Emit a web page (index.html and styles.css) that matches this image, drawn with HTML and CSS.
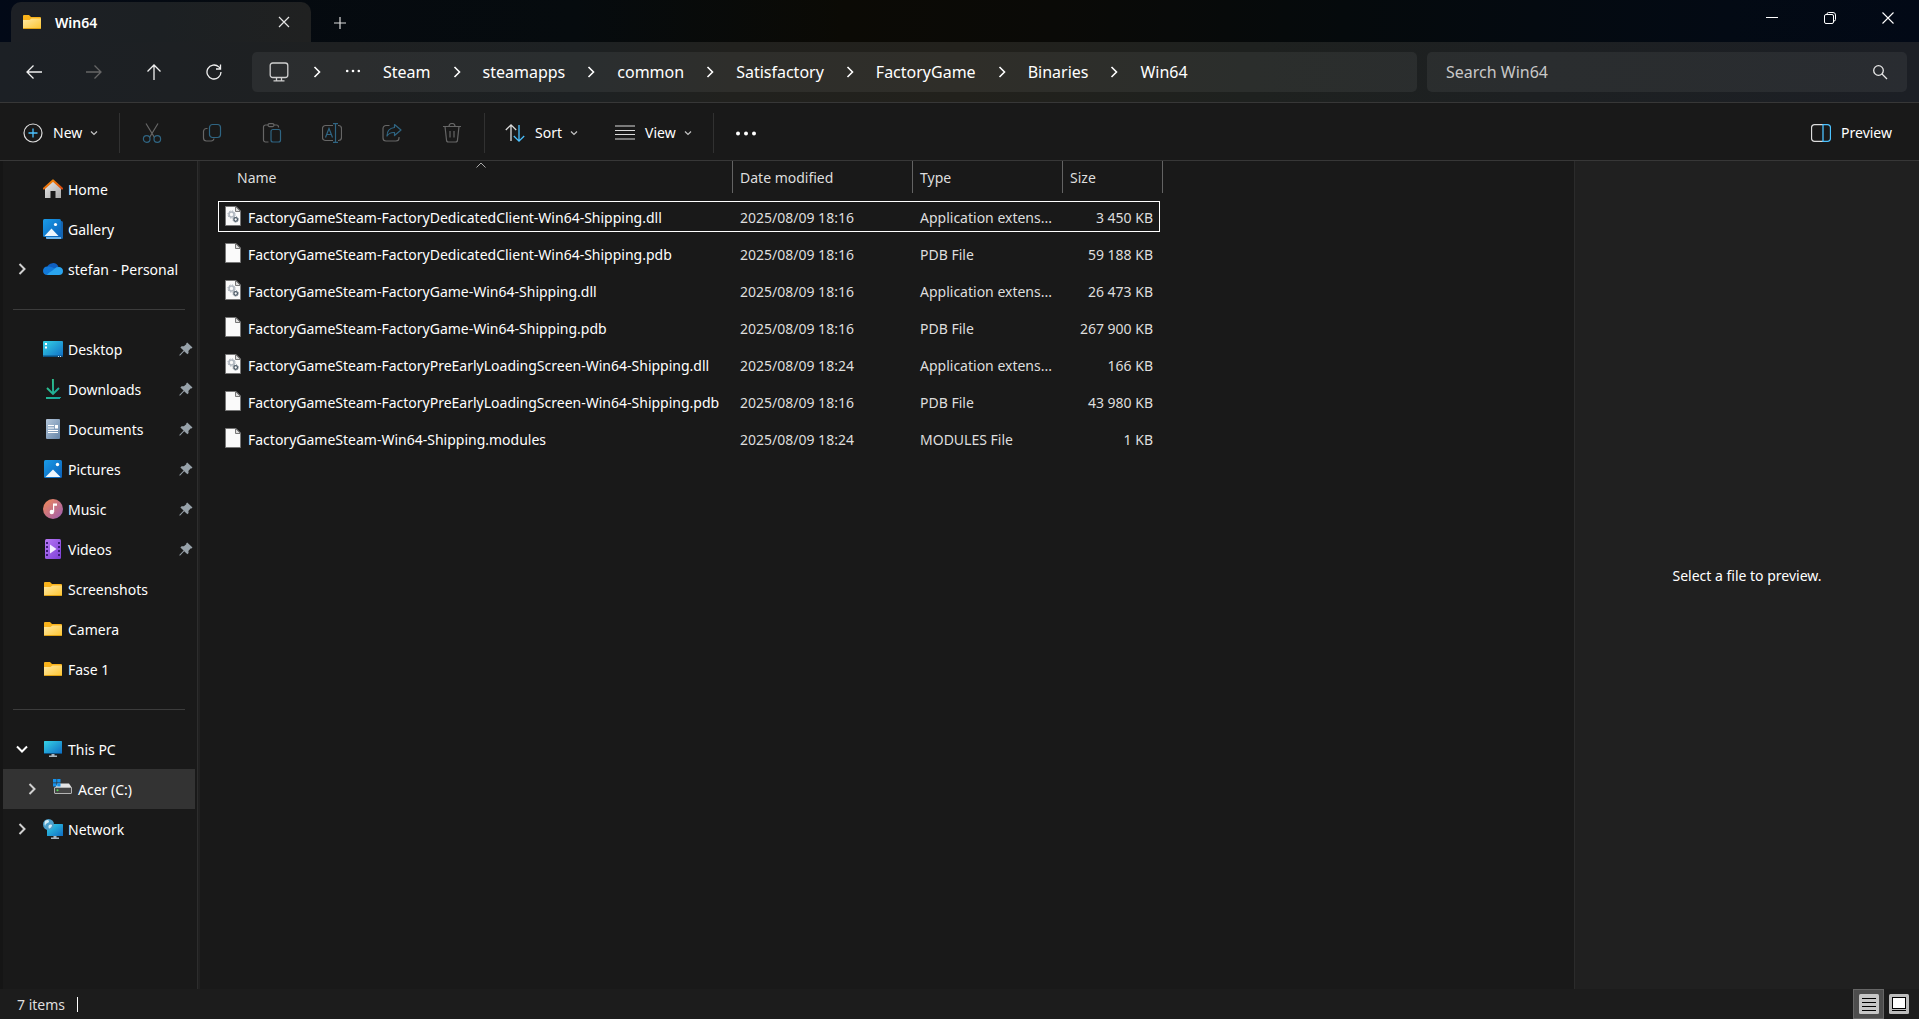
FILE: index.html
```html
<!DOCTYPE html>
<html lang="en">
<head>
<meta charset="utf-8">
<title>Win64</title>
<link rel="stylesheet" href="styles.css">
</head>
<body>
<svg class="defs" aria-hidden="true">
  <defs>
    <linearGradient id="g-folder" x1="0" y1="0" x2="1" y2="1"><stop offset="0" stop-color="#ffe9a6"/><stop offset="1" stop-color="#fdc52f"/></linearGradient>
    <linearGradient id="g-blue" x1="0" y1="0" x2="1" y2="1"><stop offset="0" stop-color="#1a9ce8"/><stop offset="1" stop-color="#0a5fb8"/></linearGradient>
    <linearGradient id="g-screen" x1="0" y1="0" x2="1" y2="1"><stop offset="0" stop-color="#35d3e6"/><stop offset="1" stop-color="#0f6cc4"/></linearGradient>
    <linearGradient id="g-house" x1="0" y1="0" x2="1" y2="1"><stop offset="0" stop-color="#e8e8e8"/><stop offset="1" stop-color="#a9a9a9"/></linearGradient>
    <linearGradient id="g-roof" x1="0" y1="0" x2="1" y2="1"><stop offset="0" stop-color="#f7930a"/><stop offset="1" stop-color="#d9480f"/></linearGradient>
    <linearGradient id="g-down" x1="0" y1="0" x2="1" y2="1"><stop offset="0" stop-color="#37c888"/><stop offset="1" stop-color="#14a3a0"/></linearGradient>
    <linearGradient id="g-doc" x1="0" y1="0" x2="1" y2="1"><stop offset="0" stop-color="#b4c6da"/><stop offset="1" stop-color="#6585a8"/></linearGradient>
    <linearGradient id="g-music" x1="0" y1="0" x2="1" y2="1"><stop offset="0" stop-color="#f58a54"/><stop offset="1" stop-color="#9a5cb4"/></linearGradient>
    <linearGradient id="g-video" x1="0" y1="0" x2="1" y2="1"><stop offset="0" stop-color="#b878f5"/><stop offset="1" stop-color="#7c3fd6"/></linearGradient>
    <symbol id="folder" viewBox="0 0 20 20">
      <path d="M1 4a1 1 0 0 1 1-1h5l2 2h9a1 1 0 0 1 1 1v5H1z" fill="#f9b21a"/>
      <path d="M1 8h6.500l2-1.500H19V16a1 1 0 0 1-1 1H2a1 1 0 0 1-1-1z" fill="url(#g-folder)"/>
      <path d="M1 16h18a1 1 0 0 1-1 1H2a1 1 0 0 1-1-1z" fill="#dfa114"/>
    </symbol>
    <symbol id="pin" viewBox="0 0 14 14"><path d="M8.200.500 13.500 5.600 12.400 6.600 11.500 6.500 9.400 9 9.600 11 8.400 12.300 5.200 9.200 1.200 13.400.300 13.600.500 12.700 4.600 8.500 1.400 5.500 2.600 4.200 4.800 4.300 7.300 2.300 7.200 1.400z" fill="#98a2aa"/></symbol>
    <symbol id="right" viewBox="0 0 12 12"><path d="M3.500 1l5 5-5 5" fill="none" stroke="currentColor"/></symbol>
    <symbol id="down" viewBox="0 0 12 12"><path d="M1 3.500l5 5 5-5" fill="none" stroke="currentColor"/></symbol>
    <symbol id="small-down" viewBox="0 0 8 8"><path d="M1 2.500l3 3 3-3" fill="none" stroke="#c4c4c4" stroke-width="1.200"/></symbol>
    <symbol id="file" viewBox="0 0 16 20">
      <path d="M.500.500H11L15.500 5V19.500H.500z" fill="#fafafa" stroke="#777"/>
      <path d="M10.500.500V5.500H15.500z" fill="#dcdcdc" stroke="#777"/>
    </symbol>
    <symbol id="dll" viewBox="0 0 16 20">
      <use href="#file"/>
      <circle cx="6.500" cy="8.500" r="2.500" fill="none" stroke="#b3bac2" stroke-width="1.600"/>
      <circle cx="6.500" cy="8.500" r="3.600" fill="none" stroke="#a3abb5" stroke-width="1" stroke-dasharray="1.400 1.430"/>
      <circle cx="10.700" cy="13.500" r="1.800" fill="none" stroke="#4c5a67" stroke-width="1.300"/>
      <circle cx="10.700" cy="13.500" r="2.700" fill="none" stroke="#4c5a67" stroke-width=".8" stroke-dasharray="1 1.120"/>
    </symbol>
  </defs>
</svg>

<header class="titlebar">
  <div class="tab">
    <svg class="i20"><use href="#folder"/></svg>
    <span class="tab-title">Win64</span>
    <button class="tab-close" aria-label="Close tab"><svg class="i12" viewBox="0 0 12 12"><path d="M1 1l10 10M11 1L1 11" stroke="#e6e6e6" stroke-width="1.200"/></svg></button>
  </div>
  <button class="tab-add" aria-label="New tab"><svg class="i12" viewBox="0 0 12 12"><path d="M0 6h12M6 0v12" stroke="#dcdcdc" stroke-width="1.200"/></svg></button>
  <div class="window-controls">
    <button aria-label="Minimize"><svg class="i12" viewBox="0 0 12 12"><path d="M0 5.500h12" stroke="#fff"/></svg></button>
    <button aria-label="Restore"><svg class="i12" viewBox="0 0 12 12" fill="none" stroke="#fff"><rect x=".5" y="2.500" width="9" height="9" rx="1.500"/><path d="M3 2.500V2A1.500 1.500 0 0 1 4.500.500H9A2.500 2.500 0 0 1 11.500 3v4.500A1.500 1.500 0 0 1 10 9H9.500"/></svg></button>
    <button aria-label="Close"><svg class="i12" viewBox="0 0 12 12"><path d="M.500.500l11 11M11.500.500l-11 11" stroke="#fff" stroke-width="1.100"/></svg></button>
  </div>
</header>

<nav class="navbar" aria-label="Address">
  <div class="nav-buttons">
    <button aria-label="Back"><svg class="i16" viewBox="0 0 16 16"><path d="M16 8H1M7.500 1.500L1 8l6.500 6.500" /></svg></button>
    <button aria-label="Forward" disabled><svg class="i16" viewBox="0 0 16 16"><path d="M0 8h15M8.500 1.500L15 8l-6.500 6.500" /></svg></button>
    <button aria-label="Up"><svg class="i16" viewBox="0 0 16 16"><path d="M8 16V1M1.500 7.500L8 1l6.500 6.500" /></svg></button>
    <button aria-label="Refresh"><svg class="i16" viewBox="0 0 16 16"><path d="M15 8a7 7 0 1 1-2.200-5.100L14.500 4.500M14.500.500v4.500h-4.500" /></svg></button>
  </div>
  <div class="address">
    <button class="crumb-device" aria-label="Computer"><svg class="i20" viewBox="0 0 20 20" fill="none" stroke="#cfcfcf" stroke-width="1.300"><rect x="1.200" y="1" width="17.600" height="14.500" rx="2.500"/><path d="M7.500 15.500v3M12.500 15.500v3M4.500 18.800h11"/></svg></button>
    <svg class="crumb-arrow"><use href="#right"/></svg>
    <button class="crumb-more" aria-label="More folders"><svg class="i16" viewBox="0 0 16 16" fill="#fff"><circle cx="2.200" cy="7" r="1.300"/><circle cx="8" cy="7" r="1.300"/><circle cx="13.800" cy="7" r="1.300"/></svg></button>
    <a class="crumb" href="#">Steam</a><svg class="crumb-arrow"><use href="#right"/></svg>
    <a class="crumb" href="#">steamapps</a><svg class="crumb-arrow"><use href="#right"/></svg>
    <a class="crumb" href="#">common</a><svg class="crumb-arrow"><use href="#right"/></svg>
    <a class="crumb" href="#">Satisfactory</a><svg class="crumb-arrow"><use href="#right"/></svg>
    <a class="crumb" href="#">FactoryGame</a><svg class="crumb-arrow"><use href="#right"/></svg>
    <a class="crumb" href="#">Binaries</a><svg class="crumb-arrow"><use href="#right"/></svg>
    <a class="crumb" href="#">Win64</a>
  </div>
  <div class="search">
    <input type="search" placeholder="Search Win64" aria-label="Search Win64">
    <svg class="i16" viewBox="0 0 16 16" fill="none" stroke="#e8e8e8" stroke-width="1.300"><circle cx="6.500" cy="6.500" r="4.800"/><path d="M10 10l5 5"/></svg>
  </div>
</nav>

<div class="toolbar" role="toolbar" aria-label="Commands">
  <button class="cmd cmd-new"><svg class="i20" viewBox="0 0 20 20" fill="none"><circle cx="10" cy="10" r="9" stroke="#dcdcdc" stroke-width="1.200"/><path d="M10 5.500v9M5.500 10h9" stroke="#4cc2ff" stroke-width="1.300"/></svg><span>New</span><svg class="i8"><use href="#small-down"/></svg></button>
  <span class="divider"></span>
  <button class="cmd-icon" aria-label="Cut" disabled><svg class="i20" viewBox="0 0 20 20" fill="none" stroke-width="1.200"><path d="M4 .500l8.500 14M16 .500L7.500 14.500" stroke="#666"/><circle cx="4.700" cy="16" r="3.300" stroke="#2f6583"/><circle cx="15.300" cy="16" r="3.300" stroke="#2f6583"/></svg></button>
  <button class="cmd-icon" aria-label="Copy" disabled><svg class="i20" viewBox="0 0 20 20" fill="none" stroke-width="1.200"><path d="M5.500 5.500H4.500A3 3 0 0 0 1.500 8.500V15a3 3 0 0 0 3 3H9a3 3 0 0 0 3-2.500" stroke="#666"/><rect x="7.500" y="1.500" width="11" height="13" rx="3" stroke="#2f6583"/></svg></button>
  <button class="cmd-icon" aria-label="Paste" disabled><svg class="i20" viewBox="0 0 20 20" fill="none" stroke-width="1.200"><path d="M6.500 19H3.500A2 2 0 0 1 1.500 17V4A2 2 0 0 1 3.500 2H6M12 2h2.500a2 2 0 0 1 2 2v.500" stroke="#666"/><rect x="6" y=".6" width="6" height="3" rx="1.500" stroke="#666"/><rect x="9" y="6.500" width="9.500" height="12.500" rx="2" stroke="#2f6583"/></svg></button>
  <button class="cmd-icon" aria-label="Rename" disabled><svg class="i20" viewBox="0 0 20 20" fill="none" stroke-width="1.200"><path d="M11 2.500H3.500a3 3 0 0 0-3 3v9a3 3 0 0 0 3 3H11M16 2.500h.500a3 3 0 0 1 3 3v9a3 3 0 0 1-3 3H16" stroke="#666"/><path d="M3.500 14.500L7 5.500l3.500 9M4.800 11.500h4.400M13.500 1v18M11 .600h5M11 19.400h5" stroke="#2f6583"/></svg></button>
  <button class="cmd-icon" aria-label="Share" disabled><svg class="i20" viewBox="0 0 20 20" fill="none" stroke-width="1.200" stroke-linejoin="round"><path d="M7.500 2.500H4a3 3 0 0 0-3 3V15a3 3 0 0 0 3 3h10a3 3 0 0 0 3-3v-1" stroke="#666"/><path d="M12.500 1.500L19 7l-6.500 5.500V9.500C9 9.300 6.500 10.500 5 13c0-5 3-8 7.500-8.500z" stroke="#2f6583"/></svg></button>
  <button class="cmd-icon" aria-label="Delete" disabled><svg class="i20" viewBox="0 0 20 20" fill="none" stroke="#666" stroke-width="1.200"><path d="M1 3.500h18M7 3.500a3 3 0 0 1 6 0M3 3.500l1.500 13.500a2 2 0 0 0 2 2h7a2 2 0 0 0 2-2L17 3.500M8 8v6.500M12 8v6.500"/></svg></button>
  <span class="divider"></span>
  <button class="cmd cmd-sort"><svg class="i20" viewBox="0 0 20 20" fill="none" stroke-width="1.300"><path d="M6 18V2M.800 7L6 1.800 11.200 7" stroke="#dcdcdc"/><path d="M14 2v16M8.800 13l5.200 5.200L19.200 13" stroke="#4cc2ff"/></svg><span>Sort</span><svg class="i8"><use href="#small-down"/></svg></button>
  <button class="cmd cmd-view"><svg class="i20" viewBox="0 0 20 20" stroke="#dcdcdc" stroke-width="1.200"><path d="M0 3h20M0 7.500h20M0 11.500h20M0 16h20"/></svg><span>View</span><svg class="i8"><use href="#small-down"/></svg></button>
  <span class="divider"></span>
  <button class="cmd-icon" aria-label="See more"><svg class="i20" viewBox="0 0 20 20" fill="#fff"><circle cx="2" cy="10.500" r="2"/><circle cx="10" cy="10.500" r="2"/><circle cx="18" cy="10.500" r="2"/></svg></button>
  <button class="cmd cmd-preview"><svg class="i20" viewBox="0 0 20 20" fill="none" stroke-width="1.300"><path d="M12 1.700H3.500a3 3 0 0 0-3 3v10.600a3 3 0 0 0 3 3H12" stroke="#dcdcdc"/><path d="M12 1.700h4.500a3 3 0 0 1 3 3v10.600a3 3 0 0 1-3 3H12z" stroke="#4cc2ff"/></svg><span>Preview</span></button>
</div>

<div class="content">
  <aside class="sidebar">
    <a class="item" href="#"><i class="twist"></i><svg class="i20" viewBox="0 0 20 20"><path d="M2 9l8-7 8 7v10h-5.500v-7h-5v7H2z" fill="url(#g-house)"/><path d="M1 9.500L10 1.500l9 8" fill="none" stroke="url(#g-roof)" stroke-width="2.200" stroke-linecap="round" stroke-linejoin="round"/></svg><span>Home</span></a>
    <a class="item" href="#"><i class="twist"></i><svg class="i20" viewBox="0 0 20 20"><rect x="3" y="2" width="17" height="18" rx="1.500" fill="#1564b0"/><path d="M3 18h15v2H4a1 1 0 0 1-1-1z" fill="#6fb4ea"/><rect width="18" height="18" rx="1.500" fill="url(#g-blue)"/><path d="M1.500 17l7-7.500 7 7.500z" fill="#eef6fd"/><circle cx="12.500" cy="5.500" r="1.600" fill="#fff"/></svg><span>Gallery</span></a>
    <a class="item" href="#"><i class="twist"><svg class="i12"><use href="#right"/></svg></i><svg class="i20" viewBox="0 0 20 20"><path d="M4 9a6 6 0 0 1 11.500-1L9 13z" fill="#0f5fc0"/><path d="M4.500 7.500C1.500 7.500 0 9.500 0 12c0 2.500 2 4 4 4h5l4-6-4-1.800A7 7 0 0 0 4.500 7.500z" fill="#1279d8"/><path d="M4 16h12a4 4 0 0 0 4-4 4 4 0 0 0-4.500-4c-3 0-4 2-6 3.500S5 14 4 16z" fill="#2aa4ee"/></svg><span>stefan - Personal</span></a>
    <hr class="rule">
    <a class="item" href="#"><i class="twist"></i><svg class="i20" viewBox="0 0 20 20"><rect y="2" width="20" height="16" rx="1" fill="url(#g-screen)"/><path d="M0 16.500h20V17a1 1 0 0 1-1 1H1a1 1 0 0 1-1-1z" fill="#0b4f80"/><path d="M2 4h2v2H2zM2 7.500h2v2H2z" fill="#fff"/><path d="M15 17h1v1h-1zM17 17h1v1h-1z" fill="#cde"/></svg><span>Desktop</span><svg class="pin"><use href="#pin"/></svg></a>
    <a class="item" href="#"><i class="twist"></i><svg class="i20" viewBox="0 0 20 20" fill="none" stroke="url(#g-down)" stroke-width="1.900"><path d="M9.900 0l.2 15M4 9l6 6 6-6M3 19h14l0 .01"/></svg><span>Downloads</span><svg class="pin"><use href="#pin"/></svg></a>
    <a class="item" href="#"><i class="twist"></i><svg class="i20" viewBox="0 0 20 20"><rect x="3" width="14" height="20" rx="1" fill="url(#g-doc)"/><path d="M5 6.500h6M5 9h6M5 11.500h10M5 13.500h10" stroke="#fff" stroke-width="1.200"/><path d="M12 6h3v3.500h-3z" fill="#fff"/></svg><span>Documents</span><svg class="pin"><use href="#pin"/></svg></a>
    <a class="item" href="#"><i class="twist"></i><svg class="i20" viewBox="0 0 20 20"><rect x="1" y="1" width="18" height="18" rx="1.500" fill="url(#g-blue)"/><path d="M2.500 18L10 10.500l7.500 7.500z" fill="#eef6fd"/><circle cx="14.500" cy="5.500" r="1.700" fill="#fff"/></svg><span>Pictures</span><svg class="pin"><use href="#pin"/></svg></a>
    <a class="item" href="#"><i class="twist"></i><svg class="i20" viewBox="0 0 20 20"><circle cx="10" cy="10" r="10" fill="url(#g-music)"/><circle cx="8.800" cy="13" r="2.200" fill="#fff"/><path d="M10 13V4.500h4v2.300h-2.800V13z" fill="#fff"/></svg><span>Music</span><svg class="pin"><use href="#pin"/></svg></a>
    <a class="item" href="#"><i class="twist"></i><svg class="i20" viewBox="0 0 20 20"><rect x="2" width="16" height="20" rx="1.500" fill="url(#g-video)"/><path d="M4 3v15M16 3v15" stroke="#3c1c78" stroke-width="2" stroke-dasharray="2 2"/><path d="M7 5.500l6.500 4.500L7 14.500z" fill="#f3ecff"/></svg><span>Videos</span><svg class="pin"><use href="#pin"/></svg></a>
    <a class="item" href="#"><i class="twist"></i><svg class="i20"><use href="#folder"/></svg><span>Screenshots</span></a>
    <a class="item" href="#"><i class="twist"></i><svg class="i20"><use href="#folder"/></svg><span>Camera</span></a>
    <a class="item" href="#"><i class="twist"></i><svg class="i20"><use href="#folder"/></svg><span>Fase 1</span></a>
    <hr class="rule">
    <a class="item" href="#"><i class="twist open"><svg class="i12"><use href="#down"/></svg></i><svg class="i20" viewBox="0 0 20 20"><rect x="1" y="2" width="18" height="13" rx=".5" fill="url(#g-screen)"/><path d="M1 14h18v1H1z" fill="#0b4f80"/><path d="M8.500 15h3v1.500h2.500V18H6v-1.500h2.500z" fill="#a9b4bd"/></svg><span>This PC</span></a>
    <a class="item nested selected" href="#"><i class="twist"><svg class="i12"><use href="#right"/></svg></i><svg class="i20" viewBox="0 0 20 20"><path d="M4.500 4.500h11.500l3 4.500H2z" fill="#e4e4e4"/><rect x="1.500" y="8.500" width="17" height="6" rx=".5" fill="#454545" stroke="#b4b4b4"/><circle cx="4.500" cy="11.300" r="1" fill="#52e052"/><path d="M0 0h3.500v3.500H0zM4.200 0h3.300v3.500H4.200zM0 4.200h3.500v3.300H0zM4.200 4.200h3.300v3.300H4.200z" fill="#1692ec"/></svg><span>Acer (C:)</span></a>
    <a class="item" href="#"><i class="twist"><svg class="i12"><use href="#right"/></svg></i><svg class="i20" viewBox="0 0 20 20"><rect x="4" y="5" width="16" height="12" rx=".5" fill="url(#g-screen)"/><path d="M10.500 17h3v1.500h2.500V20H8v-1.500h2.500z" fill="#a9b4bd"/><circle cx="5.500" cy="5.500" r="5.500" fill="#4c9fcb"/><path d="M2 2c2-1.500 4-1 4 .500S3 4 2.500 6 1 5 2 2zM6 6c1.500-1 3-.500 3 .500S7.500 9 6.500 9.500 5 7 6 6z" fill="#d2ebf5"/></svg><span>Network</span></a>
  </aside>

  <main class="files">
    <table class="list">
      <colgroup><col class="c-name"><col class="c-date"><col class="c-type"><col class="c-size"></colgroup>
      <thead><tr>
        <th scope="col" class="sorted">Name<svg class="sort-mark" viewBox="0 0 10 6"><path d="M.500 5.500L5 1l4.500 4.500" fill="none" stroke="#aaa"/></svg></th>
        <th scope="col">Date modified</th><th scope="col">Type</th><th scope="col">Size</th>
      </tr></thead>
      <tbody>
        <tr class="focused"><td><div class="name"><svg class="fi"><use href="#dll"/></svg>FactoryGameSteam-FactoryDedicatedClient-Win64-Shipping.dll</div></td><td>2025/08/09 18:16</td><td>Application extens...</td><td>3 450 KB</td></tr>
        <tr><td><div class="name"><svg class="fi"><use href="#file"/></svg>FactoryGameSteam-FactoryDedicatedClient-Win64-Shipping.pdb</div></td><td>2025/08/09 18:16</td><td>PDB File</td><td>59 188 KB</td></tr>
        <tr><td><div class="name"><svg class="fi"><use href="#dll"/></svg>FactoryGameSteam-FactoryGame-Win64-Shipping.dll</div></td><td>2025/08/09 18:16</td><td>Application extens...</td><td>26 473 KB</td></tr>
        <tr><td><div class="name"><svg class="fi"><use href="#file"/></svg>FactoryGameSteam-FactoryGame-Win64-Shipping.pdb</div></td><td>2025/08/09 18:16</td><td>PDB File</td><td>267 900 KB</td></tr>
        <tr><td><div class="name"><svg class="fi"><use href="#dll"/></svg>FactoryGameSteam-FactoryPreEarlyLoadingScreen-Win64-Shipping.dll</div></td><td>2025/08/09 18:24</td><td>Application extens...</td><td>166 KB</td></tr>
        <tr><td><div class="name"><svg class="fi"><use href="#file"/></svg>FactoryGameSteam-FactoryPreEarlyLoadingScreen-Win64-Shipping.pdb</div></td><td>2025/08/09 18:16</td><td>PDB File</td><td>43 980 KB</td></tr>
        <tr><td><div class="name"><svg class="fi"><use href="#file"/></svg>FactoryGameSteam-Win64-Shipping.modules</div></td><td>2025/08/09 18:24</td><td>MODULES File</td><td>1 KB</td></tr>
      </tbody>
    </table>
  </main>

  <section class="preview" aria-label="Preview">Select a file to preview.</section>
</div>

<footer class="status">
  <span class="count">7 items</span>
  <div class="view-modes">
    <button class="active" aria-label="Details view"><svg class="i20" viewBox="0 0 20 20"><rect width="20" height="20" rx="1.500" fill="#c6c6c6"/><path d="M3 4.500h14M3 8.500h14M3 12.500h14M3 16.500h14" stroke="#000"/></svg></button>
    <button aria-label="Large icons view"><svg class="i20" viewBox="0 0 20 20"><rect width="20" height="20" rx="1.500" fill="#bcbcbc"/><rect x="3.500" y="3.500" width="13" height="11" fill="#fff" stroke="#000"/><path d="M3 16.500h14" stroke="#000"/></svg></button>
  </div>
</footer>
</body>
</html>
```
FILE: styles.css
```css
* { box-sizing: border-box; }
body {
  margin: 0;
  height: 100vh;
  display: flex;
  flex-direction: column;
  overflow: hidden;
  background: #191919;
  color: #fff;
  font: 14px/20px "Noto Sans", "Open Sans", sans-serif;
}
button {
  margin: 0;
  padding: 0;
  border: 0;
  background: none;
  color: inherit;
  font: inherit;
  display: flex;
  align-items: center;
  justify-content: center;
}
a { color: inherit; text-decoration: none; }
svg { display: block; flex: none; }
.defs { position: absolute; width: 0; height: 0; }
.i8 { width: 8px; height: 8px; }
.i12 { width: 12px; height: 12px; }
.i16 { width: 16px; height: 16px; }
.i20 { width: 20px; height: 20px; }

/* Title bar */
.titlebar {
  flex: none;
  height: 42px;
  display: flex;
  padding: 2px 2px 0 11px;
  background: linear-gradient(90deg, #020917 0%, #050a10 12%, #060b0e 30%, #0b0a05 44%, #0a0a07 55%, #050a0c 70%, #030a14 90%, #020916 100%);
}
.tab {
  width: 300px;
  display: flex;
  align-items: center;
  padding: 0 17px 0 11px;
  border-radius: 10px 10px 0 0;
  background: linear-gradient(90deg, #1d2025, #1c2023 50%, #202121);
}
.tab-title { margin-left: 13px; padding-top: 2px; font-weight: 600; }
.tab-close { width: 20px; height: 20px; margin-left: auto; }
.tab-add { width: 58px; padding-top: 2px; }
.window-controls { margin-left: auto; display: flex; height: 32px; }
.window-controls button { width: 58px; }

/* Address row */
.navbar {
  flex: none;
  height: 61px;
  display: flex;
  align-items: center;
  padding-right: 12px;
  border-bottom: 1px solid #373737;
  background: linear-gradient(90deg, #1c2025 0%, #1e2021 18%, #1d2123 30%, #21211e 38%, #22211c 50%, #1e211f 65%, #1d2022 80%, #1c1f25 100%);
}
.nav-buttons { width: 252px; display: flex; padding-left: 4px; }
.nav-buttons button { width: 60px; height: 40px; }
.nav-buttons path { fill: none; stroke: #f0f0f0; stroke-width: 1.3; }
.nav-buttons button:disabled path { stroke: #666; }
.address, .search {
  height: 40px;
  display: flex;
  align-items: center;
  border-radius: 5px;
  background: rgba(255, 255, 255, .06);
  font-size: 16px;
}
.address { flex: 1; min-width: 0; padding-left: 17px; }
.crumb-arrow { width: 12px; height: 12px; margin: 0 20px; stroke-width: 1.6; }
.crumb-device + .crumb-arrow { margin: 0 22px; }
.crumb-more { margin-right: 22px; }
.search { width: 480px; margin-left: 10px; padding: 0 19px; }
.search input {
  flex: 1;
  min-width: 0;
  padding: 0;
  border: 0;
  outline: 0;
  background: none;
  color: #fff;
  font: inherit;
}
.search input::placeholder { color: #c8c8c8; opacity: 1; }

/* Command row */
.toolbar {
  flex: none;
  height: 58px;
  display: flex;
  align-items: center;
  padding-top: 3px;
  border-bottom: 1px solid #373737;
}
.divider { width: 1px; height: 40px; margin: 0 2px; background: #313131; }
.cmd { height: 40px; gap: 10px; justify-content: flex-start; }
.cmd .i8 { margin-left: -2px; }
.cmd-new { width: 117px; padding-left: 23px; }
.cmd-sort { width: 112px; padding-left: 18px; }
.cmd-view { width: 112px; padding-left: 16px; }
.cmd-icon { width: 60px; height: 40px; }
.cmd-preview { margin-left: auto; margin-right: 27px; }

/* Body */
.content { flex: 1; min-height: 0; display: flex; }
.sidebar {
  width: 198px;
  padding: 8px 2px 0 0;
  border-left: 3px solid #151515;
  border-right: 1px solid #2d2d2d;
  overflow: hidden;
}
.item {
  height: 40px;
  display: flex;
  align-items: center;
  padding: 0 2px 0 10px;
  white-space: nowrap;
}
.item span { margin-left: 5px; padding-top: 2px; }
.twist { width: 30px; padding-left: 3px; color: #d0d0d0; stroke-width: 2; }
.open { color: #fff; }
.nested { padding-left: 20px; }
.selected { background: #333; }
.pin { width: 14px; height: 14px; margin-left: auto; }
.rule { height: 1px; margin: 20px 10px 19px; border: 0; background: #3c3c3c; }

.files { flex: 1; min-width: 0; padding-left: 15px; border-left: 2px solid #202020; }
.list {
  table-layout: fixed;
  width: 948px;
  border-collapse: separate;
  border-spacing: 0;
  color: #dedede;
}
.c-name { width: 518px; }
.c-date { width: 180px; }
.c-type { width: 150px; }
.c-size { width: 100px; }
.list th {
  position: relative;
  height: 32px;
  padding: 2px 0 0 7px;
  border-right: 1px solid #636363;
  text-align: left;
  font-weight: 400;
}
.list th:first-child { padding-left: 22px; }
.sort-mark { position: absolute; top: 1px; left: 50%; width: 10px; height: 6px; margin-left: 2px; }
.list tbody::before { content: ""; display: block; height: 5px; }
.list td { height: 37px; padding: 2px 0 0 7px; white-space: nowrap; }
.list td:first-child { padding-left: 10px; color: #fff; }
.list td:last-child { padding-right: 10px; text-align: right; }
.name { display: flex; align-items: center; gap: 7px; }
.fi { width: 16px; height: 20px; margin-bottom: 4px; }
.focused { outline: 1px solid #fff; outline-offset: -4px; }

.preview {
  width: 345px;
  display: flex;
  align-items: center;
  justify-content: center;
  padding-top: 2px;
  border-left: 1px solid #2b2b2b;
  background: #202020;
}

/* Status bar */
.status {
  flex: none;
  height: 30px;
  display: flex;
  align-items: center;
  justify-content: space-between;
  padding: 0 5px 0 17px;
  background: #1c1c1c;
  color: #dedede;
}
.count { display: flex; align-items: center; gap: 12px; padding-top: 1px; }
.count::after { content: ""; width: 1px; height: 15px; background: #fff; }
.view-modes { display: flex; }
.view-modes button { width: 30px; height: 30px; }
.view-modes .active { width: 31px; border: 1px solid #666; background: #4d4d4d; }
```
